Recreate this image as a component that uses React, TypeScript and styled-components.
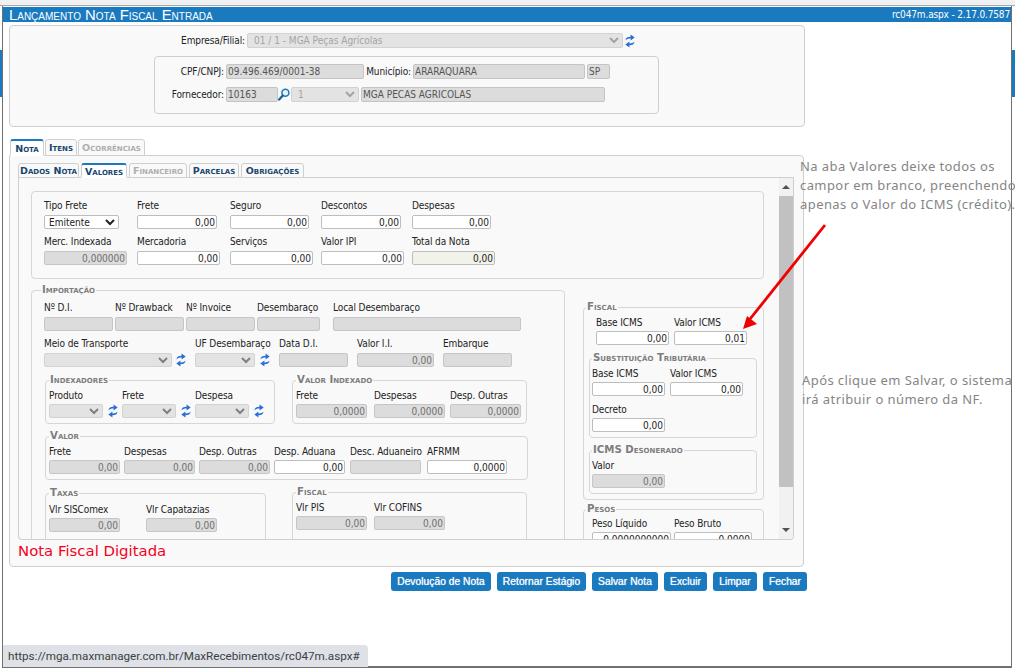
import React from 'react';
import styled, { createGlobalStyle } from 'styled-components';

const GlobalStyle = createGlobalStyle`
  html, body {
    margin: 0;
    padding: 0;
    background: #fff;
  }
  * {
    box-sizing: border-box;
  }
`;

const FONT = `'DejaVu Sans Condensed', 'DejaVu Sans', 'Liberation Sans', sans-serif`;
const WIDE_FONT = `'DejaVu Sans', 'Liberation Sans', sans-serif`;

function RefreshIcon() {
  return (
    <RefreshWrap viewBox="0 0 10 14" aria-hidden="true">
      <path
        fill="#2a6fd6"
        d="M.5 6.5C.6 3.6 3 2.6 5.6 2.7V.4L9.7 3.6 5.6 6.6V4.6C3.6 4.5 2 5 .5 6.5z"
      />
      <path
        fill="#2a6fd6"
        d="M9.5 7.5C9.4 10.4 7 11.4 4.4 11.3v2.3L.3 10.4 4.4 7.4v2C6.4 9.5 8 9 9.5 7.5z"
      />
    </RefreshWrap>
  );
}

function SearchIcon() {
  return (
    <SearchWrap viewBox="0 0 12 13" aria-hidden="true">
      <circle cx="7.4" cy="4.8" r="3.5" fill="#e6f2fa" stroke="#1a7abf" strokeWidth="1.5" />
      <path d="M4.8 7.6L1.2 11.6" stroke="#14609a" strokeWidth="2.2" strokeLinecap="round" />
    </SearchWrap>
  );
}

interface FieldProp {
  label: string;
  width: number;
  left?: number;
  value?: string;
  disabled?: boolean;
  tint?: boolean;
}

function Field({ label, width, left = 0, value = '', disabled, tint }: FieldProp) {
  return (
    <FieldWrap $width={width} $left={left}>
      <FieldLabel>{label}</FieldLabel>
      <TextInput readOnly value={value} $disabled={disabled} $tint={tint} />
    </FieldWrap>
  );
}

interface PickProp {
  label: string;
  width: number;
  left?: number;
}

function Pick({ label, width, left = 0 }: PickProp) {
  return (
    <FieldWrap $width={width} $left={left}>
      <FieldLabel>{label}</FieldLabel>
      <SelectBox disabled />
    </FieldWrap>
  );
}

export default function App() {
  return (
    <Page>
      <GlobalStyle />
      <TopStrip />
      <Window>
        <TitleBar>
          <TitleText>Lançamento Nota Fiscal Entrada</TitleText>
          <VersionText>rc047m.aspx - 2.17.0.7587</VersionText>
        </TitleBar>
        <Body>
          <HeaderPanel>
            <CompanyRow>
              <RowLabel $width={237}>Empresa/Filial:</RowLabel>
              <HeaderSelect $width={376} disabled>
                <option>01 / 1 - MGA Peças Agrícolas</option>
              </HeaderSelect>
              <RefreshIcon />
            </CompanyRow>
            <SupplierPanel>
              <SupplierRow>
                <RowLabel $width={69}>CPF/CNPJ:</RowLabel>
                <HeaderInput $width={138} readOnly value="09.496.469/0001-38" />
                <RowLabel $width={49}>Município:</RowLabel>
                <HeaderInput $width={172} readOnly value="ARARAQUARA" />
                <HeaderInput $width={23} $left={2} readOnly value="SP" />
              </SupplierRow>
              <SupplierRow>
                <RowLabel $width={69}>Fornecedor:</RowLabel>
                <HeaderInput $width={52} readOnly value="10163" />
                <SearchIcon />
                <HeaderSelect $width={68} $left={1} disabled>
                  <option>1</option>
                </HeaderSelect>
                <HeaderInput $width={244} $left={2} readOnly value="MGA PECAS AGRICOLAS" />
              </SupplierRow>
            </SupplierPanel>
          </HeaderPanel>

          <TabStrip>
            <Tab $active $width={34}>Nota</Tab>
            <Tab $width={32}>Itens</Tab>
            <Tab $off $width={67}>Ocorrências</Tab>
          </TabStrip>
          <TabPanel>
            <SubTabStrip>
              <Tab $width={61}>Dados Nota</Tab>
              <Tab $active $width={46} $left={2}>Valores</Tab>
              <Tab $off $width={58} $left={2}>Financeiro</Tab>
              <Tab $width={50} $left={2}>Parcelas</Tab>
              <Tab $width={63} $left={2}>Obrigações</Tab>
            </SubTabStrip>
            <ScrollArea>
              <ScrollContent>
                <TotalsBox>
                  <FieldRow>
                    <FieldWrap $width={75} $left={0}>
                      <FieldLabel>Tipo Frete</FieldLabel>
                      <FreightSelect>
                        <option>Emitente</option>
                      </FreightSelect>
                    </FieldWrap>
                    <Field label="Frete" width={80} left={18} value="0,00" />
                    <Field label="Seguro" width={79} left={13} value="0,00" />
                    <Field label="Descontos" width={80} left={12} value="0,00" />
                    <Field label="Despesas" width={79} left={11} value="0,00" />
                  </FieldRow>
                  <FieldRow>
                    <Field label="Merc. Indexada" width={83} value="0,000000" disabled />
                    <Field label="Mercadoria" width={83} left={10} value="0,00" />
                    <Field label="Serviços" width={83} left={10} value="0,00" />
                    <Field label="Valor IPI" width={83} left={8} value="0,00" />
                    <Field label="Total da Nota" width={83} left={8} value="0,00" tint />
                  </FieldRow>
                </TotalsBox>

                <Columns>
                  <ImportGroup>
                    <GroupTitle $left={-2}>Importação</GroupTitle>
                    <FieldRow>
                      <Field label="Nº D.I." width={69} disabled />
                      <Field label="Nº Drawback" width={69} left={2} disabled />
                      <Field label="Nº Invoice" width={69} left={2} disabled />
                      <Field label="Desembaraço" width={63} left={2} disabled />
                      <Field label="Local Desembaraço" width={188} left={13} disabled />
                    </FieldRow>
                    <FieldRow>
                      <Pick label="Meio de Transporte" width={128} />
                      <RefreshSlot $left={4}><RefreshIcon /></RefreshSlot>
                      <Pick label="UF Desembaraço" width={60} left={9} />
                      <RefreshSlot $left={5}><RefreshIcon /></RefreshSlot>
                      <Field label="Data D.I." width={69} left={9} disabled />
                      <Field label="Valor I.I." width={77} left={9} value="0,00" disabled />
                      <Field label="Embarque" width={69} left={9} disabled />
                    </FieldRow>

                    <NestedRow $top={7}>
                      <SubGroup $width={230}>
                        <GroupTitle $left={4}>Indexadores</GroupTitle>
                        <SubFields>
                          <Pick label="Produto" width={54} />
                          <RefreshSlot $left={5}><RefreshIcon /></RefreshSlot>
                          <Pick label="Frete" width={54} left={4} />
                          <RefreshSlot $left={5}><RefreshIcon /></RefreshSlot>
                          <Pick label="Despesa" width={54} left={4} />
                          <RefreshSlot $left={5}><RefreshIcon /></RefreshSlot>
                        </SubFields>
                      </SubGroup>
                      <SubGroup $width={235} $left={17}>
                        <GroupTitle $left={4}>Valor Indexado</GroupTitle>
                        <SubFields>
                          <Field label="Frete" width={71} value="0,0000" disabled />
                          <Field label="Despesas" width={71} left={7} value="0,0000" disabled />
                          <Field label="Desp. Outras" width={71} left={5} value="0,0000" disabled />
                        </SubFields>
                      </SubGroup>
                    </NestedRow>

                    <NestedRow $top={6}>
                      <SubGroup $width={483}>
                        <GroupTitle $left={4}>Valor</GroupTitle>
                        <SubFields>
                          <Field label="Frete" width={71} value="0,00" disabled />
                          <Field label="Despesas" width={71} left={4} value="0,00" disabled />
                          <Field label="Desp. Outras" width={71} left={4} value="0,00" disabled />
                          <Field label="Desp. Aduana" width={71} left={4} value="0,00" />
                          <Field label="Desc. Aduaneiro" width={71} left={5} disabled />
                          <Field label="AFRMM" width={80} left={6} value="0,0000" />
                        </SubFields>
                      </SubGroup>
                    </NestedRow>

                    <NestedRow $top={6}>
                      <SubGroup $width={221} $top={1} $open>
                        <GroupTitle $left={4}>Taxas</GroupTitle>
                        <SubFields $top={4}>
                          <Field label="Vlr SISComex" width={71} value="0,00" disabled />
                          <Field label="Vlr Capatazias" width={71} left={26} value="0,00" disabled />
                        </SubFields>
                      </SubGroup>
                      <SubGroup $width={235} $left={26} $open>
                        <GroupTitle $left={4}>Fiscal</GroupTitle>
                        <SubFields>
                          <Field label="Vlr PIS" width={71} value="0,00" disabled />
                          <Field label="Vlr COFINS" width={71} left={7} value="0,00" disabled />
                        </SubFields>
                      </SubGroup>
                    </NestedRow>
                  </ImportGroup>

                  <SideColumn>
                    <FiscalGroup>
                      <GroupTitle $left={3}>Fiscal</GroupTitle>
                      <SubFields $left={12}>
                        <Field label="Base ICMS" width={73} value="0,00" />
                        <Field label="Valor ICMS" width={73} left={5} value="0,01" />
                      </SubFields>
                      <InnerGroup $top={7}>
                        <GroupTitle $left={3}>Substituição Tributária</GroupTitle>
                        <SubFields $left={2}>
                          <Field label="Base ICMS" width={73} value="0,00" />
                          <Field label="Valor ICMS" width={73} left={5} value="0,00" />
                        </SubFields>
                        <SubFields $left={2} $top={7}>
                          <Field label="Decreto" width={73} value="0,00" />
                        </SubFields>
                      </InnerGroup>
                      <InnerGroup $top={6}>
                        <GroupTitle $left={3}>ICMS Desonerado</GroupTitle>
                        <SubFields $left={2}>
                          <Field label="Valor" width={73} value="0,00" disabled />
                        </SubFields>
                      </InnerGroup>
                    </FiscalGroup>
                    <WeightGroup>
                      <GroupTitle $left={3}>Pesos</GroupTitle>
                      <SubFields $left={8} $top={2}>
                        <Field label="Peso Líquido" width={79} value="0,0000000000" />
                        <Field label="Peso Bruto" width={78} left={3} value="0,0000" />
                      </SubFields>
                    </WeightGroup>
                  </SideColumn>
                </Columns>
              </ScrollContent>
              <ScrollBar>
                <ScrollButton><ArrowUp /></ScrollButton>
                <ScrollThumb />
                <ScrollButton><ArrowDown /></ScrollButton>
              </ScrollBar>
            </ScrollArea>
            <StatusText>Nota Fiscal Digitada</StatusText>
          </TabPanel>

          <ButtonRow>
            <ActionButton $width={100}>Devolução de Nota</ActionButton>
            <ActionButton $width={89}>Retornar Estágio</ActionButton>
            <ActionButton $width={66}>Salvar Nota</ActionButton>
            <ActionButton $width={43}>Excluir</ActionButton>
            <ActionButton $width={44}>Limpar</ActionButton>
            <ActionButton $width={44}>Fechar</ActionButton>
          </ButtonRow>
        </Body>
      </Window>

      <NoteTop>
        Na aba Valores deixe todos os
        <br />
        campor em branco, preenchendo
        <br />
        apenas o Valor do ICMS (crédito).
      </NoteTop>
      <NoteBottom>
        Após clique em Salvar, o sistema
        <br />
        irá atribuir o número da NF.
      </NoteBottom>
      <ArrowMark viewBox="0 0 1015 669" aria-hidden="true">
        <path d="M825 225L750 319" stroke="#f00000" strokeWidth="2.8" fill="none" />
        <path d="M743 329L747 316L757 324z" fill="#f00000" />
      </ArrowMark>
      <LinkPreview>https://mga.maxmanager.com.br/MaxRecebimentos/rc047m.aspx#</LinkPreview>
    </Page>
  );
}

/*
 ** page and window
 */
const Page = styled.div`
  position: relative;
  width: 1015px;
  height: 669px;
  overflow: hidden;
  padding: 0 3px 1px 2px;
  display: flex;
  flex-direction: column;
  font-family: ${FONT};
  background: linear-gradient(#fff 50px, #1a7abf 50px, #1a7abf 97px, #fff 97px);
`;

const TopStrip = styled.div`
  flex: none;
  height: 6px;
  margin: 0 -3px 0 -2px;
  background: #f0f1f3;
  border-bottom: 1px solid #a8a8a8;
`;

const Window = styled.div`
  flex: 1;
  min-height: 0;
  background: #fff;
  border: 1px solid #707070;
  border-top: 0;
  border-bottom-width: 2px;
  padding-top: 1px;
`;

const TitleBar = styled.div`
  height: 15px;
  padding: 0 1px 0 6px;
  display: flex;
  align-items: center;
  justify-content: space-between;
  background: #1a7abf;
  color: #fff;
`;

const TitleText = styled.span`
  font-family: 'Liberation Sans', sans-serif;
  font-size: 14.8px;
  font-variant: small-caps;
  white-space: nowrap;
`;

const VersionText = styled.span`
  font-size: 10px;
  letter-spacing: -0.15px;
  white-space: nowrap;
`;

const Body = styled.div`
  width: 804px;
  padding: 3px 0 0 6px;
`;

/*
 ** header
 */
const HeaderPanel = styled.div`
  width: 796px;
  height: 102px;
  padding-top: 7px;
  background: #f9f9f9;
  border: 1px solid #cfcfcf;
  border-radius: 4px;
`;

const CompanyRow = styled.div`
  display: flex;
  align-items: center;
  height: 15px;
`;

const RowLabel = styled.label<{ $width: number }>`
  flex: none;
  width: ${props => props.$width}px;
  padding-right: 2px;
  font-size: 10px;
  letter-spacing: -0.1px;
  color: #222;
  text-align: right;
  white-space: nowrap;
`;

const HeaderSelect = styled.select<{ $width: number; $left?: number }>`
  flex: none;
  width: ${props => props.$width}px;
  height: 15px;
  margin-left: ${props => props.$left ?? 0}px;
  padding: 0 0 0 2px;
  font-family: ${FONT};
  font-size: 10px;
  color: #a4a4a4;
  background-color: #e3e3e3;
  border: 1px solid #d2d2d2;
  border-radius: 2px;
  opacity: 1;
`;

const HeaderInput = styled.input<{ $width: number; $left?: number }>`
  flex: none;
  width: ${props => props.$width}px;
  height: 15px;
  margin-left: ${props => props.$left ?? 0}px;
  padding: 0 1px;
  font-family: ${FONT};
  font-size: 10px;
  color: #555;
  background: #dcdcdc;
  border: 1px solid #c4c4c4;
  border-radius: 2px;
  outline: none;
`;

const SupplierPanel = styled.div`
  width: 505px;
  height: 58px;
  margin: 8px 0 0 144px;
  padding: 7px 0 0 0;
  display: flex;
  flex-direction: column;
  gap: 8px;
  background: #f9f9f9;
  border: 1px solid #cfcfcf;
  border-radius: 4px;
`;

const SupplierRow = styled.div`
  display: flex;
  align-items: center;
  height: 15px;
  padding-left: 2px;
`;

const RefreshWrap = styled.svg`
  flex: none;
  width: 10px;
  height: 14px;
  margin-left: 2px;
`;

const SearchWrap = styled.svg`
  flex: none;
  width: 12px;
  height: 13px;
  margin-left: 0;
`;

/*
 ** tabs
 */
const TabStrip = styled.div`
  display: flex;
  align-items: flex-end;
  gap: 1px;
  height: 16px;
  margin-top: 12px;
  padding-left: 1px;
`;

const SubTabStrip = styled.div`
  display: flex;
  align-items: flex-end;
  height: 15px;
  border-bottom: 1px solid #cfcfcf;
`;

const Tab = styled.div<{ $active?: boolean; $off?: boolean; $width: number; $left?: number }>`
  flex: none;
  width: ${props => props.$width}px;
  height: calc(100% + 1px);
  margin-left: ${props => props.$left ?? 0}px;
  margin-bottom: -1px;
  display: flex;
  align-items: center;
  justify-content: center;
  font-family: ${WIDE_FONT};
  font-size: 9.5px;
  font-weight: 700;
  font-variant: small-caps;
  white-space: nowrap;
  color: ${props => (props.$off ? '#aeaeae' : '#18466f')};
  background: ${props => (props.$active ? '#fff' : '#f9f9f9')};
  border: 1px solid #cfcfcf;
  border-top: ${props => (props.$active ? '2px solid #1a7abf' : '1px solid #cfcfcf')};
  border-bottom-color: ${props => (props.$active ? '#fff' : '#cfcfcf')};
  border-radius: 3px 3px 0 0;
`;

const TabPanel = styled.div`
  width: 795px;
  height: 412px;
  padding: 7px 9px 0 8px;
  background: #f9f9f9;
  border: 1px solid #cfcfcf;
  border-radius: 0 4px 4px 4px;
`;

const ScrollArea = styled.div`
  display: flex;
  height: 362px;
  border: 1px solid #cfcfcf;
  border-top: 0;
  border-radius: 0 0 4px 4px;
  overflow: hidden;
`;

const ScrollContent = styled.div`
  flex: 1;
  min-width: 0;
  padding: 13px 0 0 12px;
  overflow: hidden;
`;

const ScrollBar = styled.div`
  flex: none;
  width: 14px;
  display: flex;
  flex-direction: column;
  justify-content: space-between;
  background: #f1f1f1;
`;

const ScrollButton = styled.div`
  height: 18px;
  display: flex;
  align-items: center;
  justify-content: center;
`;

const ArrowUp = styled.span`
  border: 4px solid transparent;
  border-top: 0;
  border-bottom: 4px solid #505050;
`;

const ArrowDown = styled.span`
  border: 4px solid transparent;
  border-bottom: 0;
  border-top: 4px solid #505050;
`;

const ScrollThumb = styled.div`
  height: 291px;
  margin-bottom: 34px;
  background: #c1c1c1;
`;

const StatusText = styled.div`
  height: 26px;
  font-family: 'DejaVu Sans', sans-serif;
  font-size: 14.9px;
  line-height: 22px;
  color: #f5001e;
  white-space: nowrap;
`;

/*
 ** form groups
 */
const TotalsBox = styled.div`
  width: 733px;
  height: 88px;
  padding: 7px 0 0 12px;
  display: flex;
  flex-direction: column;
  gap: 6px;
  border: 1px solid #d6d6d6;
  border-radius: 4px;
`;

const Columns = styled.div`
  display: flex;
  align-items: flex-start;
  margin-top: 5px;
`;

const FieldRow = styled.div`
  display: flex;
  & + & {
    margin-top: 6px;
  }
  ${TotalsBox} & + & {
    margin-top: 0;
  }
`;

const NestedRow = styled.div<{ $top: number }>`
  display: flex;
  align-items: flex-start;
  margin: ${props => props.$top}px 0 0 1px;
`;

const SubFields = styled.div<{ $top?: number; $left?: number }>`
  display: flex;
  padding: ${props => props.$top ?? 3}px 0 0 ${props => props.$left ?? 3}px;
`;

const FieldWrap = styled.div<{ $width: number; $left: number }>`
  flex: none;
  width: ${props => props.$width}px;
  margin-left: ${props => props.$left}px;
`;

const FieldLabel = styled.label`
  display: block;
  height: 12px;
  margin-bottom: 4px;
  font-size: 10px;
  line-height: 14px;
  letter-spacing: -0.1px;
  color: #222;
  white-space: nowrap;
  ${SubFields} & {
    margin-bottom: 3px;
  }
`;

const TextInput = styled.input<{ $disabled?: boolean; $tint?: boolean }>`
  display: block;
  width: 100%;
  height: 14px;
  padding: 0 1px;
  font-family: ${FONT};
  font-size: 10px;
  text-align: right;
  outline: none;
  color: ${props => (props.$disabled ? '#6f6f6f' : '#222')};
  background: ${props =>
    props.$disabled ? '#dcdcdc' : props.$tint ? '#f1f3ea' : '#fff'};
  border: 1px solid ${props => (props.$disabled ? '#c6c6c6' : '#bdbdbd')};
  border-radius: 2px;
`;

const SelectBox = styled.select`
  display: block;
  width: 100%;
  height: 14px;
  padding: 0;
  background-color: #e3e3e3;
  border: 1px solid #d2d2d2;
  border-radius: 2px;
  opacity: 1;
`;

const FreightSelect = styled.select`
  display: block;
  width: 100%;
  height: 14px;
  padding: 0;
  font-family: ${FONT};
  font-size: 10px;
  line-height: 12px;
  color: #222;
  background-color: #fff;
  border: 1px solid #bdbdbd;
  border-radius: 2px;
`;

const RefreshSlot = styled.div<{ $left: number }>`
  flex: none;
  width: 10px;
  height: 14px;
  margin: 16px 0 0 ${props => props.$left}px;
  display: flex;
  ${SubFields} & {
    margin-top: 15px;
  }
  ${RefreshWrap} {
    margin-left: 0;
  }
`;

const BaseGroup = styled.fieldset`
  margin: 0;
  min-width: 0;
  border: 1px solid #d6d6d6;
  border-radius: 4px;
`;

const GroupTitle = styled.legend<{ $left: number }>`
  height: 12px;
  margin-left: ${props => props.$left - 1}px;
  padding: 0 1px;
  font-family: ${WIDE_FONT};
  font-size: 10.2px;
  font-weight: 700;
  font-variant: small-caps;
  line-height: 12px;
  color: #7d7d7d;
  white-space: nowrap;
`;

const ImportGroup = styled(BaseGroup)`
  flex: none;
  width: 534px;
  height: 340px;
  padding: 5px 0 0 12px;
`;

const SubGroup = styled(BaseGroup)<{ $width: number; $left?: number; $top?: number; $open?: boolean }>`
  flex: none;
  width: ${props => props.$width}px;
  height: ${props => (props.$open ? '90px' : 'auto')};
  margin-left: ${props => props.$left ?? 0}px;
  margin-top: ${props => props.$top ?? 0}px;
  padding: 0 0 5px 0;
`;

const SideColumn = styled.div`
  flex: none;
  width: 181px;
  margin: 17px 0 0 18px;
  display: flex;
  flex-direction: column;
  gap: 3px;
`;

const FiscalGroup = styled(BaseGroup)`
  padding: 0 0 5px 0;
`;

const InnerGroup = styled(BaseGroup)<{ $top: number }>`
  width: 168px;
  margin: ${props => props.$top}px 0 0 5px;
  padding: 0 0 5px 0;
`;

const WeightGroup = styled(BaseGroup)`
  padding: 0 0 20px 0;
`;

/*
 ** actions and overlays
 */
const ButtonRow = styled.div`
  display: flex;
  justify-content: flex-end;
  gap: 6px;
  margin-top: 5px;
`;

const ActionButton = styled.button<{ $width: number }>`
  flex: none;
  width: ${props => props.$width}px;
  height: 19px;
  padding: 0;
  font-family: 'Liberation Sans', sans-serif;
  font-size: 10.3px;
  color: #f2f8fc;
  text-shadow: 0 0 0.7px #fff;
  white-space: nowrap;
  background: #1a7abf;
  border: 0;
  border-radius: 3px;
`;

const NoteTop = styled.div`
  position: absolute;
  left: 800px;
  top: 157px;
  font-family: 'Noto Sans', sans-serif;
  font-size: 13px;
  line-height: 19px;
  letter-spacing: 0.42px;
  color: #858585;
  white-space: nowrap;
`;

const NoteBottom = styled(NoteTop)`
  left: 802px;
  top: 371px;
`;

const ArrowMark = styled.svg`
  position: absolute;
  inset: 0;
  width: 1015px;
  height: 669px;
  pointer-events: none;
`;

const LinkPreview = styled.div`
  position: absolute;
  left: 3px;
  top: 645px;
  width: 365px;
  height: 22px;
  padding-left: 5px;
  font-family: 'Roboto', sans-serif;
  font-size: 11.65px;
  line-height: 23px;
  color: #3c4043;
  white-space: nowrap;
  background: #dee1e6;
  border-radius: 0 4px 0 0;
`;
